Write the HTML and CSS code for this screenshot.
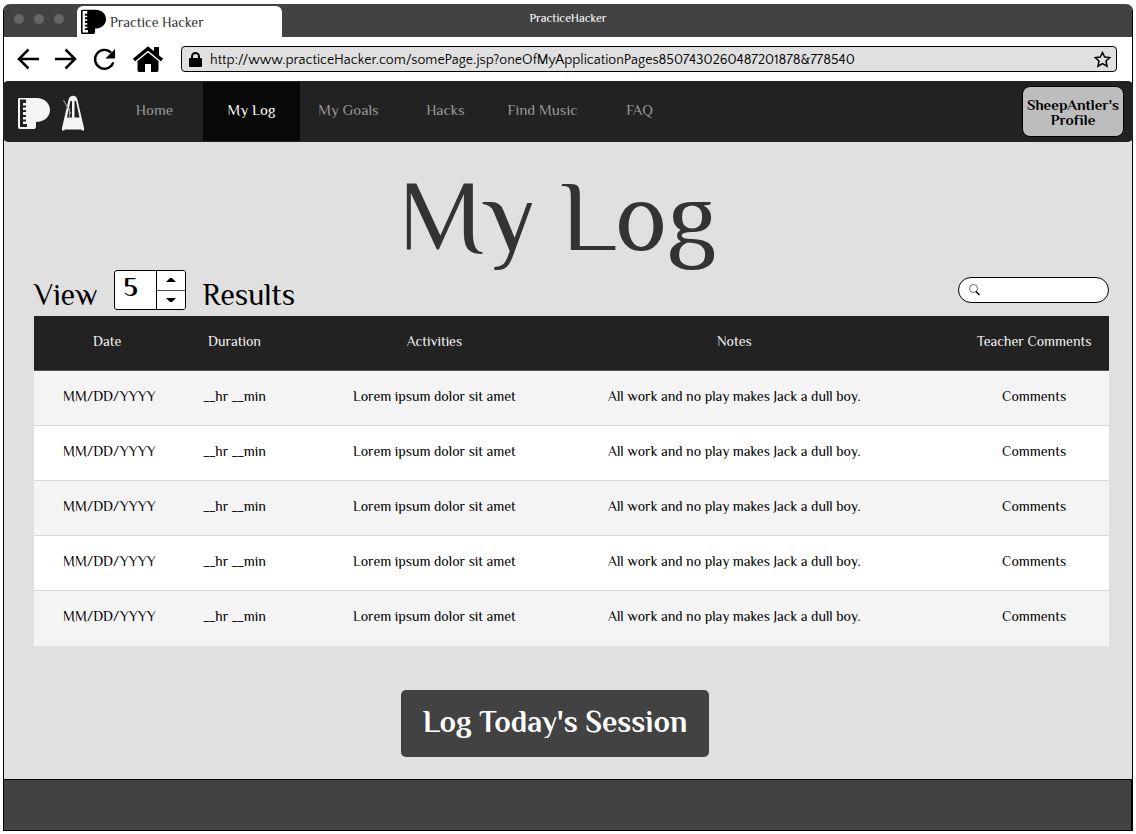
FILE: index.html
```html
<!DOCTYPE html>
<html lang="en">
<head>
<meta charset="utf-8">
<title>PracticeHacker</title>
<link rel="stylesheet" href="styles.css">
</head>
<body>
<svg class="defs" aria-hidden="true">
  <symbol id="piano" viewBox="0 0 32 32">
    <path fill-rule="evenodd" d="M2 1H19C26 1 32 6 32 13S26 25 18 25V29Q18 32 16 32H2Q0 32 0 30V2Q0 1 2 1ZM2 2.500V30H9V27H5V24.500H8V22.500H5V20H8V18H5V15H8V13H5V10.500H8V8.500H5V6H8V2.500Z"/>
  </symbol>
</svg>
<div class="browser">
  <div class="titlebar">
    <div class="titlebar-left">
      <div class="dots"><span class="dot"></span><span class="dot"></span><span class="dot"></span></div>
      <div class="tab"><svg class="tab-icon" aria-hidden="true"><use href="#piano"/></svg><span>Practice Hacker</span></div>
    </div>
    <div class="window-title">PracticeHacker</div>
  </div>
  <div class="toolbar">
    <div class="tools">
      <button class="tool" type="button" aria-label="Back"><svg width="22" height="22" viewBox="0 0 22 22"><path class="stroke" d="M22 11H2M11.500 1.500L2 11L11.500 20.500"/></svg></button>
      <button class="tool" type="button" aria-label="Forward"><svg width="22" height="22" viewBox="0 0 22 22"><path class="stroke" d="M0 11H20M10.500 1.500L20 11L10.500 20.500"/></svg></button>
      <button class="tool" type="button" aria-label="Reload"><svg width="23" height="23" viewBox="0 0 24 24"><path class="stroke" d="M21.200 15A9.800 9.800 0 1 1 19 5"/><path d="M23 1V11H13Z"/></svg></button>
      <button class="tool" type="button" aria-label="Home page"><svg width="32" height="26" viewBox="0 0 32 26"><path class="roof" d="M2 14L16 2.500L30 14"/><path d="M22 1H27V10L22 6ZM5.500 15L16 6.500L26.500 15V24Q26.500 26 25 26H19V18H13V26H7Q5.500 26 5.500 24Z"/></svg></button>
    </div>
    <div class="address">
      <svg width="13" height="15" viewBox="0 0 13 15" aria-hidden="true"><path class="shackle" d="M3 7V4.500A3.500 3.500 0 0 1 10 4.500V7"/><rect y="6" width="13" height="9" rx="1"/></svg>
      <input class="url" type="text" aria-label="Address" value="http://www.practiceHacker.com/somePage.jsp?oneOfMyApplicationPages8507430260487201878&amp;778540">
      <button class="tool" type="button" aria-label="Bookmark"><svg width="17" height="17" viewBox="0 0 17 17"><path class="star" d="M8.500 1.500L10.700 6L15.800 6.600L12 10L13 15.200L8.500 12.600L4 15.200L5 10L1.200 6.600L6.300 6Z"/></svg></button>
    </div>
  </div>
  <header class="navbar">
    <div class="brand">
      <svg class="brand-piano" aria-hidden="true"><use href="#piano"/></svg>
      <svg width="24" height="36" viewBox="0 0 24 36" aria-hidden="true"><path class="metronome" fill-rule="evenodd" d="M9.500 1.500Q12 0 14.500 1.500Q16 2 16.500 5L23 33V35.500H20.500V34.500H3.500V35.500H1V33L7.500 5Q8 2 9.500 1.500ZM8.500 10L6 22.500H11V6H9.500ZM13.500 6V22.500H18.500L15 6Z"/><path class="pendulum" d="M2.500 5L10 19M8.500 13V22"/></svg>
    </div>
    <nav class="nav">
      <a class="nav-link" href="#">Home</a>
      <a class="nav-link active" href="#" aria-current="page">My Log</a>
      <a class="nav-link" href="#">My Goals</a>
      <a class="nav-link" href="#">Hacks</a>
      <a class="nav-link" href="#">Find Music</a>
      <a class="nav-link" href="#">FAQ</a>
    </nav>
    <button class="profile" type="button">SheepAntler's Profile</button>
  </header>
  <main class="content">
    <h1 class="heading">My Log</h1>
    <div class="controls">
      <label class="view-label" for="count">View</label>
      <div class="stepper">
        <input class="count" id="count" type="number" value="5">
        <div class="steps">
          <button class="step" type="button" aria-label="More"><svg width="10" height="4" viewBox="0 0 10 4"><path d="M0 4L4 0H6L10 4Z"/></svg></button>
          <button class="step" type="button" aria-label="Fewer"><svg width="10" height="4" viewBox="0 0 10 4"><path d="M0 0L4 4H6L10 0Z"/></svg></button>
        </div>
      </div>
      <span class="view-label">Results</span>
      <label class="search">
        <svg width="11" height="12" viewBox="0 0 11 12" aria-hidden="true"><circle class="lens" cx="4.500" cy="4.500" r="4"/><path class="handle" d="M7 7.500L10.500 11"/></svg>
        <input class="search-input" type="search" aria-label="Search log">
      </label>
    </div>
    <table class="log">
      <colgroup><col class="col-date"><col class="col-duration"><col class="col-wide"><col class="col-wide"><col></colgroup>
      <thead><tr><th>Date</th><th>Duration</th><th>Activities</th><th>Notes</th><th>Teacher Comments</th></tr></thead>
      <tbody>
        <tr><td>MM/DD/YYYY</td><td>__hr __min</td><td>Lorem ipsum dolor sit amet</td><td>All work and no play makes Jack a dull boy.</td><td>Comments</td></tr>
        <tr><td>MM/DD/YYYY</td><td>__hr __min</td><td>Lorem ipsum dolor sit amet</td><td>All work and no play makes Jack a dull boy.</td><td>Comments</td></tr>
        <tr><td>MM/DD/YYYY</td><td>__hr __min</td><td>Lorem ipsum dolor sit amet</td><td>All work and no play makes Jack a dull boy.</td><td>Comments</td></tr>
        <tr><td>MM/DD/YYYY</td><td>__hr __min</td><td>Lorem ipsum dolor sit amet</td><td>All work and no play makes Jack a dull boy.</td><td>Comments</td></tr>
        <tr><td>MM/DD/YYYY</td><td>__hr __min</td><td>Lorem ipsum dolor sit amet</td><td>All work and no play makes Jack a dull boy.</td><td>Comments</td></tr>
      </tbody>
    </table>
    <div class="actions"><button class="session" type="button">Log Today's Session</button></div>
  </main>
  <footer class="footer"></footer>
</div>
</body>
</html>
```
FILE: styles.css
```css
* { box-sizing: border-box; }
body {
  margin: 4px 3px 3px;
  background: #fff;
  color: #000;
  font-family: Philosopher, Lato, sans-serif;
  font-size: 14px;
}
button, input { font: inherit; color: inherit; }
button { cursor: pointer; }
svg { display: block; flex: none; }
.defs { position: absolute; width: 0; height: 0; }

.browser {
  display: flex;
  flex-direction: column;
  min-height: calc(100vh - 7px);
  border: solid #000;
  border-width: 0 1px 1px;
  border-radius: 7px 7px 0 0;
}
.titlebar {
  display: grid;
  grid-template-columns: 1fr auto 1fr;
  height: 33px;
  background: #424242;
  border-radius: 6px 6px 0 0;
}
.titlebar-left { display: flex; gap: 13px; padding-left: 10px; }
.dots { display: flex; gap: 10px; padding-top: 10px; }
.dot { width: 10px; height: 10px; border-radius: 50%; background: #666; }
.tab {
  display: flex;
  align-items: center;
  gap: 4px;
  width: 205px;
  margin-top: 2px;
  padding-left: 4px;
  border-radius: 6px 6px 0 0;
  background: #fff;
  color: #333;
}
.tab-icon { width: 25px; height: 25px; }
.window-title { padding-top: 7px; color: #fff; font-size: 12px; line-height: 14px; }

.toolbar {
  display: flex;
  align-items: center;
  gap: 17px;
  height: 44px;
  padding: 0 15px 0 13px;
}
.tools { display: flex; align-items: center; gap: 16px; }
.tool { padding: 0; border: 0; background: none; }
.stroke { fill: none; stroke: #000; stroke-width: 2.500; }
.roof { fill: none; stroke: #000; stroke-width: 3.500; }
.address {
  display: flex;
  flex: 1;
  align-items: center;
  gap: 8px;
  height: 26px;
  padding: 0 5px 0 7px;
  border: 1px solid #000;
  border-radius: 4px;
  background: #e0e0e0;
}
.shackle { fill: none; stroke: #000; stroke-width: 2; }
.url {
  flex: 1;
  min-width: 0;
  padding: 2px 0 0;
  border: 0;
  background: none;
  color: #000;
  font-family: "Quattrocento Sans", Lato, sans-serif;
  font-size: 14px;
}
.star { fill: none; stroke: #000; stroke-width: 1.500; }

.navbar {
  display: flex;
  align-items: center;
  height: 61px;
  margin: 0 -1px;
  padding-right: 9px;
  border-radius: 5px;
  background: #222;
}
.brand { display: flex; gap: 11px; width: 103px; padding: 3px 0 0 15px; }
.brand-piano { width: 32px; height: 32px; margin-top: 2px; fill: #f4f4f4; }
.metronome { fill: #f4f4f4; }
.pendulum { fill: none; stroke: #aaa; }
.nav { display: flex; align-self: stretch; margin: 1px auto 1px 0; }
.nav-link {
  width: 97px;
  color: #999;
  font-size: 15px;
  line-height: 55px;
  text-align: center;
  text-decoration: none;
}
.active { background: #080808; color: #fff; }
.profile {
  width: 102px;
  height: 51px;
  padding: 0;
  border: 1px solid #000;
  border-radius: 8px;
  background: #bdbdbd;
  font-weight: 700;
  font-size: 15px;
  line-height: 15px;
}

.content { flex: 1; padding: 20px 23px 22px 30px; background: #e0e0e0; }
.heading {
  margin: 0;
  padding-right: 28px;
  color: #333;
  font-size: 100px;
  font-weight: 400;
  line-height: 108px;
  text-align: center;
}
.controls { display: flex; align-items: center; height: 40px; }
.view-label { padding-top: 10px; font-size: 30px; line-height: 34px; }
.stepper {
  display: flex;
  width: 72px;
  height: 40px;
  margin: 0 17px 0 16px;
  border: 1px solid #000;
  border-radius: 3px;
  background: #fff;
  overflow: hidden;
}
.count {
  width: 41px;
  padding: 0 0 5px 9px;
  border: 0;
  background: none;
  font-size: 26px;
  font-weight: 700;
  appearance: textfield;
}
.count::-webkit-inner-spin-button { display: none; }
.steps { display: flex; flex: 1; flex-direction: column; border-left: 1px solid #000; }
.step { display: grid; flex: 1; place-items: center; padding: 0; border: 0; background: #fff; }
.step + .step { border-top: 1px solid #555; }
.search {
  display: flex;
  align-items: center;
  gap: 6px;
  width: 151px;
  height: 26px;
  margin-left: auto;
  padding: 0 10px;
  border: 1px solid #000;
  border-radius: 13px;
  background: #fff;
}
.search-input { flex: 1; min-width: 0; padding: 0; border: 0; background: none; }
.lens { fill: none; stroke: #666; }
.handle { fill: none; stroke: #000; stroke-width: 1.500; }

.log { width: 100%; margin-top: 6px; border-collapse: separate; border-spacing: 0; table-layout: fixed; }
.col-date { width: 14%; }
.col-duration { width: 9.3%; }
.col-wide { width: 27.9%; }
.log th, .log td {
  height: 55px;
  padding: 0 0 4px;
  border-bottom: 1px solid #d8d8d8;
  text-align: center;
  font-size: 14px;
  font-weight: 400;
}
.log th { border-color: #555; background: #222; color: #f4f4f4; }
.log th:first-child { padding-right: 4px; }
.log th:last-child, .log td:last-child { padding-left: 75px; }
.log td { background: #fff; }
.log tbody tr:nth-child(odd) td { background: #f4f4f4; }
.log tbody tr:last-child td { border-color: #f4f4f4; }
.actions { padding: 44px 33px 0 0; text-align: center; }
.session {
  padding: 15px 22px 17px;
  border: 0;
  border-radius: 5px;
  background: #424242;
  color: #fff;
  font-size: 30px;
  font-weight: 700;
  line-height: 35px;
}
.footer { height: 51px; border-top: 1px solid #000; border-right: 1px solid #000; background: #424242; }
```
